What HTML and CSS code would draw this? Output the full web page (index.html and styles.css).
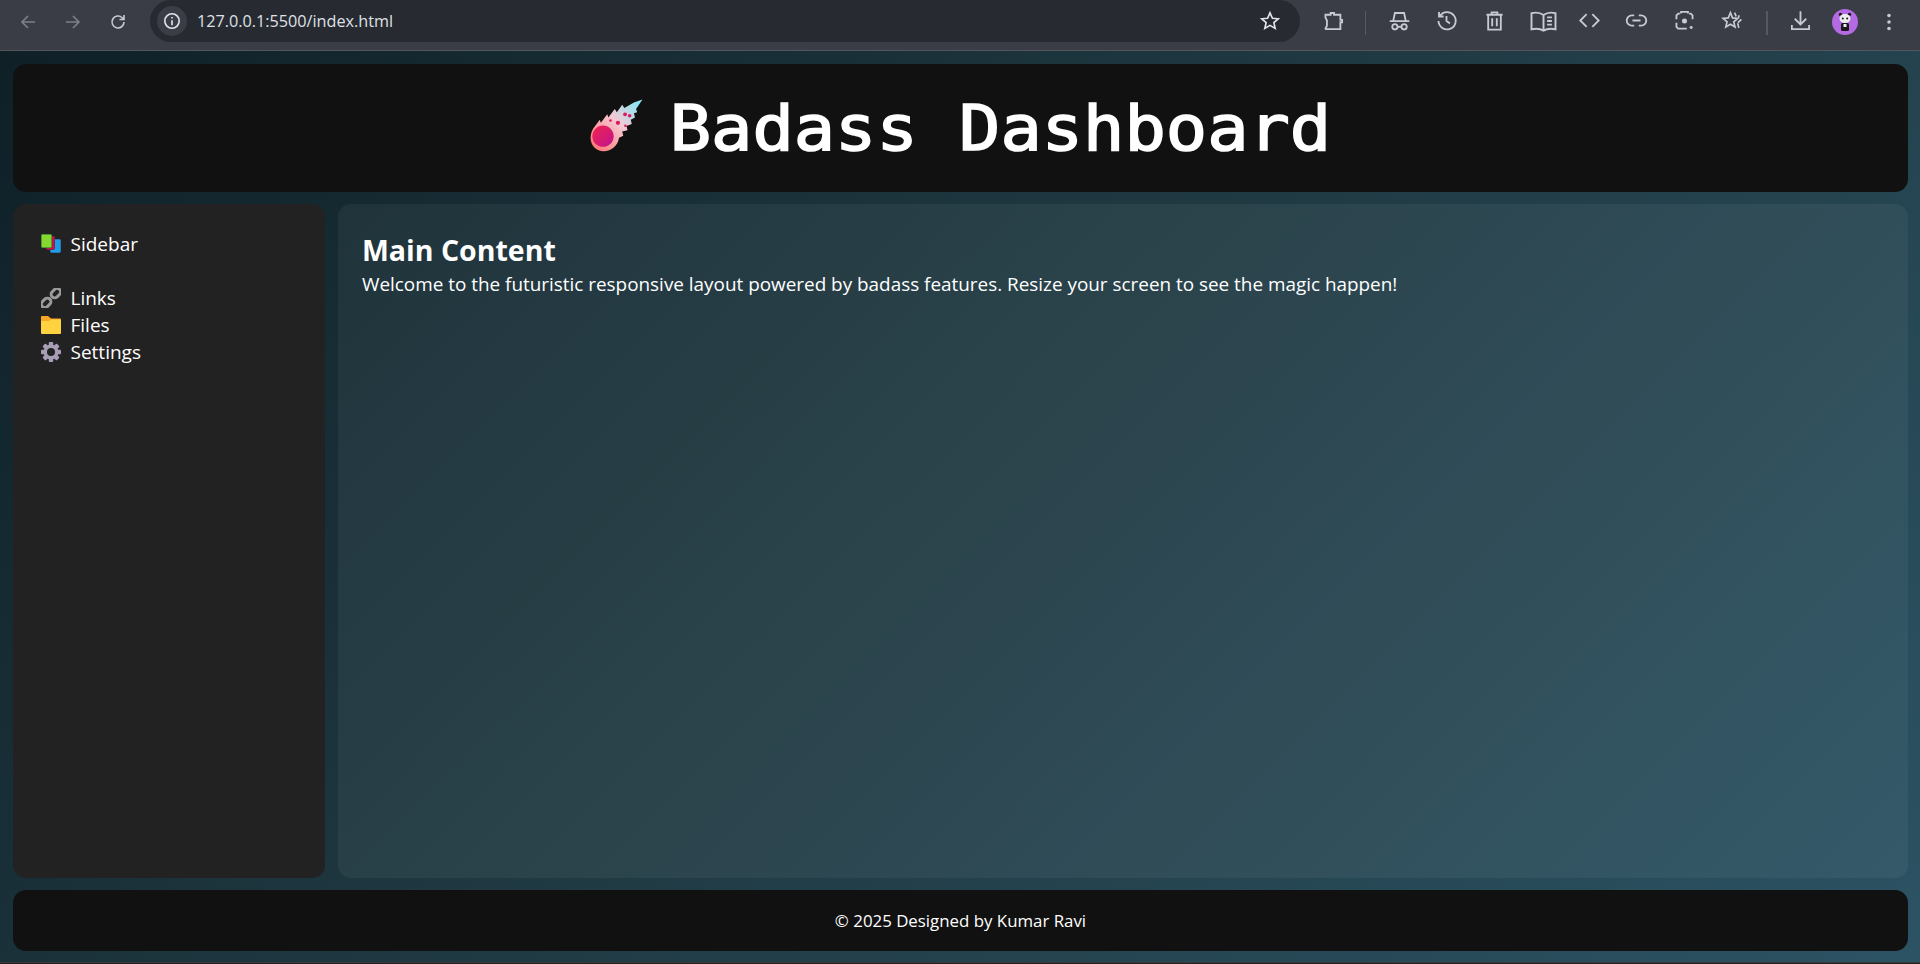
FILE: index.html
```html
<!DOCTYPE html>
<html lang="en">
<head>
<meta charset="utf-8">
<title>Badass Dashboard</title>
<link rel="stylesheet" href="styles.css">
</head>
<body>
<div class="chrome">
  <div class="nav">
    <svg class="ic dim" viewBox="0 0 20 20"><path d="M17 10H4M10 4l-6 6 6 6"/></svg>
    <svg class="ic dim" viewBox="0 0 20 20"><path d="M3 10h13M10 4l6 6-6 6"/></svg>
    <svg class="ic" viewBox="0 0 20 20"><path d="M16 10a6 6 0 1 1-1.800-4.300L16 7.500M16 3v4.500h-4.500"/></svg>
  </div>
  <div class="omni">
    <span class="info"><svg viewBox="0 0 20 20"><circle cx="10" cy="10" r="7.200"/><path d="M10 9.200v5M10 6v1.600"/></svg></span>
    <span class="url">127.0.0.1:5500/index.html</span>
    <svg class="star" viewBox="0 0 20 20"><path d="M10 2.600l2.200 4.900 5.300.5-4 3.500 1.200 5.200-4.700-2.700-4.700 2.700 1.200-5.200-4-3.500 5.300-.5z"/></svg>
  </div>
  <div class="tools">
    <svg class="ic" viewBox="0 0 20 20"><path d="M3 5h4.500V3.500h3V5H16v4.500h1.500v2H16V17.500H3.500L3 17l1.300-2.500V10L3 7.500z"/></svg>
    <i class="sep sep-a"></i>
    <svg class="ic" viewBox="0 0 20 20"><path d="M1.500 10.500h17M4.500 10.500l1.500-7h8l1.500 7"/><circle cx="6" cy="15.500" r="2.300"/><circle cx="14" cy="15.500" r="2.300"/><path d="M8.300 15.500h3.400"/></svg>
    <svg class="ic" viewBox="0 0 20 20"><path d="M4.300 6A7.500 7.500 0 1 1 3 10.500M3.500 2.500v4h4M10 6v4.500l3 2"/></svg>
    <svg class="ic" viewBox="0 0 20 20"><path d="M3 5h14M7.500 5V3h5v2M4.500 5v13h11V5M8 8v7M12 8v7"/></svg>
    <svg class="ic wide" viewBox="0 0 24 20"><path d="M12 5C9 2.800 5 2.800 2 3.500V17c3-.7 7-.7 10 1 3-1.700 7-1.700 10-1V3.500C19 2.800 15 2.800 12 5zM12 5v13M15 7h4M15 10h4M15 13h4"/></svg>
    <svg class="ic" viewBox="0 0 20 20"><path d="M7.500 4.500L2 10l5.500 5.500M12.500 4.500L18 10l-5.500 5.500"/></svg>
    <svg class="ic" viewBox="0 0 20 20"><path d="M8 5.500H6a4.500 4.500 0 0 0 0 9h2M12 5.500h2a4.500 4.500 0 0 1 0 9h-2M6.500 10h7"/></svg>
    <svg class="ic" viewBox="0 0 20 20"><path d="M6 4H4.500L3 5.500V9M14 4h1.500L17 5.500V9M3 12v3.500L4.500 17H12M7 4V2.500h6V4"/><circle cx="10" cy="10.500" r="2.200" class="fill"/><circle cx="15.800" cy="16" r="1.300" class="fill"/></svg>
    <svg class="ic" viewBox="0 0 22 20"><path d="M9 2.500l2 5 5 .4-3.800 3.300 1.200 5.100L9 13.600l-4.400 2.700 1.200-5.100L2 7.900l5-.4zM13 2.500l1.500 3.500M17.500 5l-1 2M19.500 9l-3.300 3M17 17l-1-4.500"/></svg>
    <i class="sep sep-b"></i>
    <svg class="ic" viewBox="0 0 20 20"><path d="M10 2v11M5 8.500l5 5 5-5M2.500 14v3.500h15V14"/></svg>
    <svg class="avatar" viewBox="0 0 26 26"><circle cx="13" cy="13" r="13" class="av-bg"/><circle cx="8.500" cy="5.500" r="1.700" class="av-k"/><circle cx="17.500" cy="5.500" r="1.700" class="av-k"/><ellipse cx="13" cy="9.500" rx="5.500" ry="4.500" class="av-w"/><circle cx="10.800" cy="9.500" r="1" class="av-k"/><circle cx="15.200" cy="9.500" r="1" class="av-k"/><rect x="9" y="14" width="8" height="8" rx="1.500" class="av-k"/><rect x="11.500" y="15" width="3" height="3" class="av-w"/></svg>
    <svg class="dots" viewBox="0 0 6 20"><circle cx="3" cy="3.500" r="1.800"/><circle cx="3" cy="10" r="1.800"/><circle cx="3" cy="16.500" r="1.800"/></svg>
  </div>
</div>

<div class="page">
  <header class="top">
    <svg class="comet" viewBox="0 0 60 60">
      <defs>
        <linearGradient id="tail" x1="0.100" y1="0.900" x2="0.900" y2="0.100"><stop offset="0" stop-color="#ff7f7f"/><stop offset="0.550" stop-color="#f5c8d2"/><stop offset="1" stop-color="#8fe6f5"/></linearGradient>
        <linearGradient id="core" x1="0" y1="0" x2="1" y2="1"><stop offset="0" stop-color="#f0244f"/><stop offset="1" stop-color="#c0148f"/></linearGradient>
      </defs>
      <path class="comet-tail" d="M6 33L12 25l1 3 6-8 1 3 6-8 2 3 5-7 2 3 9-5 8-3-6 9 1 3-3 1 1 4-4 2 1 4-5 2 1 4-5 1 1 4-4 2C29 50 22 55 15 54.500 5 54 0 43 6 33z"/>
      <circle class="comet-core" cx="15" cy="40.500" r="10"/>
      <circle class="comet-dot" cx="29" cy="28" r="2"/>
      <circle class="comet-dot" cx="22" cy="25.700" r="1.200"/>
      <circle class="comet-dot" cx="35.700" cy="20" r="1.800"/>
      <circle class="comet-dot" cx="40" cy="21.300" r="1.700"/>
      <circle class="comet-dot" cx="36" cy="30.700" r="1.200"/>
    </svg>
    <h1 class="title">Badass Dashboard</h1>
  </header>

  <div class="middle">
    <aside class="side">
      <div class="side-head item">
        <svg class="emoji" viewBox="0 0 20 20"><rect x="9.500" y="5.500" width="10" height="13" rx="1" class="b-blue"/><rect x="5.500" y="2.500" width="8" height="13" rx="1" class="b-red"/><rect x="0.500" y="0.500" width="10" height="13" rx="1" class="b-green"/></svg>
        <span>Sidebar</span>
      </div>
      <div class="item">
        <svg class="emoji" viewBox="0 0 20 20"><g class="chain"><rect x="-3.500" y="-7.200" width="7" height="10.500" rx="3.500" transform="translate(13.500 6.500) rotate(45)"/><rect x="-3.500" y="-3.300" width="7" height="10.500" rx="3.500" transform="translate(6.500 13.500) rotate(45)"/></g></svg>
        <span>Links</span>
      </div>
      <div class="item">
        <svg class="emoji" viewBox="0 0 20 20"><path class="f-back" d="M0 2a1 1 0 0 1 1-1h6l3 2.500h9a1 1 0 0 1 1 1V8H0z"/><path class="f-front" d="M0 6h8l2-1.500h10V18a1 1 0 0 1-1 1H1a1 1 0 0 1-1-1z"/></svg>
        <span>Files</span>
      </div>
      <div class="item">
        <svg class="emoji" viewBox="0 0 20 20"><g class="gear"><circle cx="10" cy="10" r="7.500"/><rect x="7.800" y="0" width="4.400" height="20" rx="1"/><rect x="7.800" y="0" width="4.400" height="20" rx="1" transform="rotate(45 10 10)"/><rect x="7.800" y="0" width="4.400" height="20" rx="1" transform="rotate(90 10 10)"/><rect x="7.800" y="0" width="4.400" height="20" rx="1" transform="rotate(135 10 10)"/></g><circle class="gear-hole" cx="10" cy="10" r="4"/></svg>
        <span>Settings</span>
      </div>
    </aside>
    <main class="content">
      <h2 class="heading">Main Content</h2>
      <p class="lead">Welcome to the futuristic responsive layout powered by badass features. Resize your screen to see the magic happen!</p>
    </main>
  </div>

  <footer class="foot">© 2025 Designed by Kumar Ravi</footer>
</div>
<div class="edge"></div>
</body>
</html>
```
FILE: styles.css
```css
* { box-sizing: border-box; }
html, body { margin: 0; height: 964px; overflow: hidden; }
body { display: flex; flex-direction: column; background: #222; color: #fff; font-family: "Open Sans", "Noto Sans", sans-serif; }

.chrome { height: 51px; flex: none; display: flex; background: #3a3d46; border-bottom: 1px solid #55565c; }
.nav { display: flex; width: 150px; padding-left: 18px; gap: 25px; padding-top: 12px; }
.ic { width: 20px; height: 20px; fill: none; stroke: #c7cad1; stroke-width: 1.600; flex: none; }
.ic.dim { stroke: #7d8089; }
.fill { fill: #c7cad1; stroke: none; }
.omni { width: 1150px; height: 42px; background: #282a32; border-radius: 21px; display: flex; align-items: center; padding: 0 12px 0 7px; }
.info { width: 30px; height: 30px; border-radius: 50%; background: #3a3d46; display: flex; align-items: center; justify-content: center; }
.info svg { width: 20px; height: 20px; fill: none; stroke: #e3e5ea; stroke-width: 1.600; }
.url { margin-left: 10px; flex: 1; font-size: 16.200px; color: #dfe1e6; }
.star { width: 22px; height: 22px; fill: none; stroke: #e3e5ea; stroke-width: 1.500; margin-right: 7px; }
.tools { flex: 1; display: flex; align-items: flex-start; padding: 9px 0 0 21.500px; }
.tools .ic { width: 23px; height: 23px; margin-right: 24.700px; }
.tools .ic.wide { width: 29px; height: 24px; margin: 0 20px 0 -2px; }
.sep { width: 1.500px; height: 24px; background: #565963; margin: 2px 21.500px 0 0; flex: none; }
.sep-a { margin-left: -4.700px; }
.sep-b { margin-left: -2px; }
.avatar { width: 26px; height: 26px; margin: 0 0 0 -5px; flex: none; }
.av-bg { fill: #b36ae2; }
.av-w { fill: #eee; }
.av-k { fill: #1a1a1a; }
.dots { width: 6px; height: 20px; fill: #c7cad1; margin: 3px 0 0 28px; flex: none; }

.page { flex: 1; min-height: 0; display: flex; flex-direction: column; gap: 12px; padding: 13px 12px 11px 13px; background: linear-gradient(135deg, #0f2027, #203a43, #2c5364); }
.top { height: 128px; flex: none; background: #111; border-radius: 13px; display: flex; align-items: center; justify-content: center; gap: 46.500px; }
.comet { width: 64px; height: 64px; margin-top: -7px; flex: none; }
.comet-tail { fill: url(#tail); }
.comet-core { fill: url(#core); }
.comet-dot { fill: #e0185f; }
.title { margin: 0 30.500px 0 0; font-family: "DejaVu Sans Mono", monospace; font-weight: 400; font-size: 63px; letter-spacing: 0; line-height: 1; white-space: nowrap; transform: scaleX(1.090); -webkit-text-stroke: 1.600px #fff; }

.middle { flex: 1; min-height: 0; display: flex; gap: 13px; }
.side { width: 312px; flex: none; background: #222; border-radius: 13px; padding: 26px 28px; }
.item { display: flex; align-items: center; height: 27px; gap: 9.500px; font-size: 19px; }
.side-head { margin-bottom: 27px; }
.emoji { width: 20px; height: 20px; flex: none; }
.b-green { fill: #86d72f; stroke: #4c9a34; stroke-width: 1; }
.b-red { fill: #c2134f; stroke: #8e1f4d; stroke-width: 1; }
.b-blue { fill: #1b9fe8; stroke: #2a76b8; stroke-width: 1; }
.chain rect { fill: none; stroke: #9a9a9a; stroke-width: 3; }
.f-back { fill: #f9a825; }
.f-front { fill: #ffd23f; }
.gear { fill: #a79db5; }
.gear-hole { fill: #222; }

.content { flex: 1; min-width: 0; background: rgba(255, 255, 255, 0.05); border-radius: 13px; padding: 28px 24px; }
.heading { margin: 0; font-size: 28.500px; font-weight: 700; line-height: 37px; }
.lead { margin: 2px 0 0; font-size: 18.900px; line-height: 27px; }

.foot { height: 61px; flex: none; background: #111; border-radius: 13px; display: flex; align-items: center; justify-content: center; font-size: 16.850px; }
.edge { height: 2px; flex: none; background: #222; border-top: 1px solid #3a3a3a; }
```
